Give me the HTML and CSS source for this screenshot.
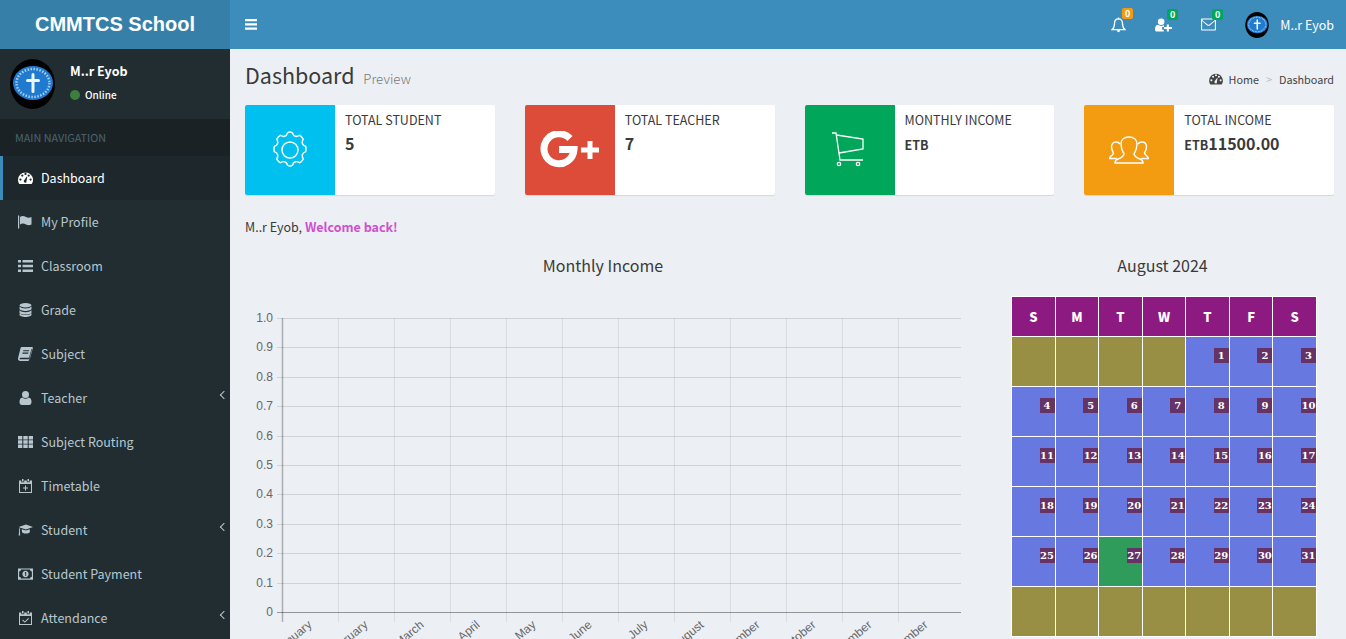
FILE: index.html
```html
<!DOCTYPE html>
<html lang="en">

<head>
    <meta charset="UTF-8">
    <meta name="viewport" content="width=device-width, initial-scale=1.0">
    <title>CMMTCS School</title>
    <link rel="stylesheet" href="styles.css">
</head>

<body>
    <svg class="defs" width="0" height="0">
        <symbol id="gauge" viewBox="0 0 16 14">
            <path fill="currentColor" fill-rule="evenodd" d="M8 1a8 8 0 0 0-8 8c0 1.600.4 3 1.200 4.200.1.200.3.300.5.300h12.600c.2 0 .4-.1.500-.3A8 8 0 0 0 8 1zM2.600 9.800a1.200 1.200 0 1 1 0-2.400 1.200 1.200 0 0 1 0 2.400zm2-4.200a1.200 1.200 0 1 1 0-2.400 1.200 1.200 0 0 1 0 2.400zM8 3.900a1.200 1.200 0 1 1 0-2.400 1.200 1.200 0 0 1 0 2.400zm1.200 7.700a1.800 1.800 0 0 1-3-1.600l3.200-4.600.5.200-1 5.400c.2.100.2.400.3.600zm2.200-6a1.200 1.200 0 1 1 0-2.400 1.200 1.200 0 0 1 0 2.400zm2 4.200a1.200 1.200 0 1 1 0-2.400 1.200 1.200 0 0 1 0 2.400z"/>
        </symbol>
        <symbol id="flag" viewBox="0 0 15 14">
            <rect x="0" y="0.500" width="1.200" height="13" fill="currentColor"/>
            <path fill="currentColor" d="M2 2c2-1.400 4-1 6 0s3.700.8 5.500 0v7.500c-1.800 1-3.500 1.100-5.500 0S4 8.200 2 9.500z"/>
        </symbol>
        <symbol id="list" viewBox="0 0 15 12">
            <path fill="currentColor" d="M0 0h3v2.600H0zM0 4.700h3v2.600H0zM0 9.400h3V12H0zM4.500 0H15v2.600H4.500zM4.500 4.700H15v2.600H4.500zM4.500 9.400H15V12H4.500z"/>
        </symbol>
        <symbol id="database" viewBox="0 0 12 14">
            <ellipse cx="6" cy="2.200" rx="6" ry="2.200" fill="currentColor"/>
            <path fill="currentColor" d="M0 3.600c1 1.300 3.500 1.900 6 1.900s5-.6 6-1.900v2.100c0 1.200-2.700 2.200-6 2.200S0 6.900 0 5.700zM0 7.300c1 1.300 3.500 1.900 6 1.900s5-.6 6-1.900v2.100c0 1.200-2.700 2.200-6 2.200S0 10.600 0 9.400zM0 10.200c1 1.300 3.500 1.900 6 1.900s5-.6 6-1.900v1.600C12 13 9.300 14 6 14s-6-1-6-2.200z"/>
        </symbol>
        <symbol id="book" viewBox="0 0 14 13">
            <path fill="currentColor" fill-rule="evenodd" d="M3.500 0H13c.7 0 1 .5.800 1.200l-2.500 9c-.2.800-.8 1.300-1.600 1.300H2.500c-.6 0-1-.3-1-.8 0-.5.400-.8 1-.8h7.800l2.300-8.300.5.400L10.400 12c-.2.700-.8 1-1.500 1H2c-1.200 0-2-.8-2-2 0-.4 0-.8.200-1.200L2.400.9C2.600.3 3 0 3.500 0zM5 3l-.3 1h5.500l.3-1zM4.300 5.200l-.3 1h5.500l.3-1z"/>
        </symbol>
        <symbol id="user" viewBox="0 0 12 14">
            <circle cx="6" cy="3.500" r="3.500" fill="currentColor"/>
            <path fill="currentColor" d="M3 6.500c.8.800 1.800 1.200 3 1.200s2.200-.4 3-1.200c2 .2 3 1.800 3 4.500 0 1.800-1 3-2.500 3h-7C1 14 0 12.800 0 11c0-2.700 1-4.300 3-4.500z"/>
        </symbol>
        <symbol id="grid" viewBox="0 0 15 12">
            <path fill="currentColor" d="M0 0h4.300v3.500H0zM5.300 0h4.400v3.500H5.300zM10.700 0H15v3.500h-4.300zM0 4.300h4.300v3.400H0zM5.300 4.300h4.400v3.400H5.300zM10.700 4.300H15v3.400h-4.300zM0 8.500h4.300V12H0zM5.300 8.500h4.400V12H5.300zM10.700 8.500H15V12h-4.300z"/>
        </symbol>
        <symbol id="cal-plus" viewBox="0 0 13 14">
            <path fill="currentColor" fill-rule="evenodd" d="M3 0h1.500v2.500H3zM8.500 0H10v2.500H8.500zM0 1.500h2.300v1.800h2.900V1.500h2.600v1.800h2.900V1.500H13V14H0zM1 5v8h11V5zM6 6.500h1v2h2v1H7v2H6v-2H4v-1h2z"/>
        </symbol>
        <symbol id="cal-check" viewBox="0 0 13 14">
            <path fill="currentColor" fill-rule="evenodd" d="M3 0h1.500v2.500H3zM8.500 0H10v2.500H8.500zM0 1.500h2.300v1.800h2.900V1.500h2.600v1.800h2.900V1.500H13V14H0zM1 5v8h11V5zM9.300 7l.7.700-4.200 4.100L3.200 9.300l.7-.7 1.900 1.800z"/>
        </symbol>
        <symbol id="cap" viewBox="0 0 18 13">
            <path fill="currentColor" d="M9.500 0l8.500 3-8.500 3L3 3.700c-.6.500-.8 1.200-.9 2 .3.200.4.400.4.700 0 .2-.1.400-.3.600L2.600 13H.8l.5-6C1.100 6.800 1 6.600 1 6.400c0-.3.100-.5.400-.7.100-1 .4-1.900 1-2.500L1 3zM4.500 5.500l5 1.700 4.500-1.600.3 3c0 1.200-2.200 2.200-4.800 2.200s-4.800-1-4.800-2.200z"/>
        </symbol>
        <symbol id="money" viewBox="0 0 16 12">
            <path fill="currentColor" fill-rule="evenodd" d="M0 0h16v12H0zM1.200 3.200v5.600c1.100 0 2 .9 2 2h9.600c0-1.100.9-2 2-2V3.200c-1.100 0-2-.9-2-2H3.200c0 1.100-.9 2-2 2zM8 2.500c1.900 0 3.300 1.600 3.300 3.500S9.900 9.500 8 9.500 4.700 7.900 4.700 6 6.100 2.500 8 2.500zM7.200 4.500v.7h.5V8h1V3.900h-.8z"/>
        </symbol>
        <symbol id="bell" viewBox="0 0 16 16">
            <path fill="none" stroke="currentColor" stroke-width="1.400" d="M8 1.500c-2.700 0-4.200 2-4.200 4.500 0 3.500-1.200 5.600-2.800 7h14c-1.600-1.400-2.800-3.500-2.800-7 0-2.500-1.500-4.500-4.200-4.500z"/>
            <path fill="currentColor" d="M6.300 13.600h3.400c0 1.200-.7 2-1.700 2s-1.700-.8-1.700-2zM7.300 0h1.400v2H7.300z"/>
        </symbol>
        <symbol id="user-plus" viewBox="0 0 18 14">
            <circle cx="6.500" cy="3.500" r="3.500" fill="currentColor"/>
            <path fill="currentColor" d="M3 6.800c1 .8 2.200 1.200 3.500 1.200 1.200 0 2.200-.3 3-.9v2h-2v3h1.800V14H2c-1.200 0-2-.8-2-2 0-2.800.8-4.900 3-5.200z"/>
            <path fill="currentColor" d="M12.500 6.500h2.200v2.500H18v2.200h-3.300V14h-2.200v-2.800H9.500V9h3z"/>
        </symbol>
        <symbol id="envelope" viewBox="0 0 16 13">
            <path fill="currentColor" fill-rule="evenodd" d="M1.300 0h13.400c.7 0 1.300.6 1.300 1.300v10.400c0 .7-.6 1.300-1.300 1.300H1.300C.6 13 0 12.400 0 11.700V1.300C0 .6.600 0 1.300 0zm-.1 2.800v8.900c0 .1 0 .1.100.1h13.400c.1 0 .1 0 .1-.1V2.800L9.700 7.200c-1 .8-2.400.8-3.400 0zm.1-1.600c0 .7.400 1 1 1.500l4.800 3.700c.5.400 1.300.4 1.800 0l4.800-3.700c.6-.5 1-.8 1-1.500z"/>
        </symbol>
        <symbol id="bars" viewBox="0 0 12 11">
            <path fill="currentColor" d="M0 0h12v2.200H0zM0 4.300h12v2.200H0zM0 8.600h12v2.200H0z"/>
        </symbol>
        <symbol id="crest" viewBox="0 0 45 50">
            <ellipse cx="22.500" cy="25" rx="22.500" ry="25" fill="#000"/>
            <ellipse cx="23" cy="24" rx="20" ry="17" fill="#1f7ad0"/>
            <ellipse cx="23" cy="24" rx="16.500" ry="14" fill="none" stroke="#d5e8f8" stroke-width="2.500" stroke-dasharray="1.500 1.500" opacity=".75"/>
            <path stroke="#eef5fb" stroke-width="3" stroke-linecap="round" fill="none" d="M23 15.500v17M17.500 21.500h11"/>
        </symbol>
    </svg>

    <header class="topbar">
        <div class="logo">CMMTCS School</div>
        <nav class="navbar">
            <svg class="bars"><use href="#bars"/></svg>
            <div class="nav-right">
                <div class="nav-icon">
                    <svg class="bell"><use href="#bell"/></svg>
                    <span class="count orange">0</span>
                </div>
                <div class="nav-icon">
                    <svg class="uplus"><use href="#user-plus"/></svg>
                    <span class="count green">0</span>
                </div>
                <div class="nav-icon">
                    <svg class="mail"><use href="#envelope"/></svg>
                    <span class="count green">0</span>
                </div>
                <div class="nav-user">
                    <svg class="nav-avatar"><use href="#crest"/></svg>
                    <span>M..r Eyob</span>
                </div>
            </div>
        </nav>
    </header>

    <div class="wrapper">
        <aside class="sidebar">
            <div class="user-panel">
                <svg class="avatar"><use href="#crest"/></svg>
                <div class="user-info">
                    <div class="user-name">M..r Eyob</div>
                    <div class="user-status"><span class="dot"></span>Online</div>
                </div>
            </div>
            <div class="menu-head">MAIN NAVIGATION</div>
            <ul class="menu">
                <li class="active"><svg class="ico"><use href="#gauge"/></svg>Dashboard</li>
                <li><svg class="ico"><use href="#flag"/></svg>My Profile</li>
                <li><svg class="ico"><use href="#list"/></svg>Classroom</li>
                <li><svg class="ico"><use href="#database"/></svg>Grade</li>
                <li><svg class="ico"><use href="#book"/></svg>Subject</li>
                <li><svg class="ico"><use href="#user"/></svg>Teacher<span class="caret"></span></li>
                <li><svg class="ico"><use href="#grid"/></svg>Subject Routing</li>
                <li><svg class="ico"><use href="#cal-plus"/></svg>Timetable</li>
                <li><svg class="ico"><use href="#cap"/></svg>Student<span class="caret"></span></li>
                <li><svg class="ico"><use href="#money"/></svg>Student Payment</li>
                <li><svg class="ico"><use href="#cal-check"/></svg>Attendance<span class="caret"></span></li>
            </ul>
        </aside>

        <main class="content">
            <div class="page-head">
                <h1>Dashboard <small>Preview</small></h1>
                <div class="crumbs">
                    <svg class="crumb-ico"><use href="#gauge"/></svg>
                    <span>Home</span>
                    <span class="sep">&gt;</span>
                    <span>Dashboard</span>
                </div>
            </div>

            <div class="boxes">
                <div class="info-box">
                    <div class="box-icon cyan">
                        <svg width="38" height="38" viewBox="0 0 38 38" fill="none" stroke="#fff" stroke-width="1.500">
                            <circle cx="19" cy="19" r="8"/>
                            <path d="M16.500 3c1.600-1 3.400-1 5 0 .5 2 1.200 3 3 3.500 1.500.5 3-.3 4.500-1 1.400 1 2.600 2.300 3.500 3.800-.8 1.500-1.400 2.800-.8 4.500.5 1.600 1.800 2.400 3.300 3 .4 1.700.4 3.700 0 5.400-1.500.6-2.800 1.400-3.300 3-.6 1.700 0 3 .8 4.500-.9 1.500-2.100 2.800-3.500 3.800-1.500-.7-3-1.500-4.500-1-1.800.5-2.500 1.500-3 3.500-1.600 1-3.400 1-5 0-.5-2-1.200-3-3-3.500-1.500-.5-3 .3-4.500 1-1.400-1-2.600-2.300-3.500-3.800.8-1.500 1.400-2.800.8-4.500-.5-1.600-1.800-2.400-3.300-3-.4-1.700-.4-3.700 0-5.400 1.500-.6 2.800-1.400 3.300-3 .6-1.700 0-3-.8-4.500.9-1.500 2.100-2.800 3.500-3.800 1.500.7 3 1.500 4.500 1 1.800-.5 2.500-1.500 3-3.500z" transform="translate(19 19) scale(.98) translate(-19 -20.500)"/>
                        </svg>
                    </div>
                    <div class="box-text">
                        <span class="box-label">TOTAL STUDENT</span>
                        <span class="box-num">5</span>
                    </div>
                </div>
                <div class="info-box">
                    <div class="box-icon red">
                        <svg width="60" height="38" viewBox="0 0 60 38">
                            <path fill="none" stroke="#fff" stroke-width="7" d="M30 7.500A15 15 0 1 0 34 18.500H19"/>
                            <path fill="#fff" d="M47.500 10h5v6.500H59v5h-6.500V28h-5v-6.500H41v-5h6.500z"/>
                        </svg>
                    </div>
                    <div class="box-text">
                        <span class="box-label">TOTAL TEACHER</span>
                        <span class="box-num">7</span>
                    </div>
                </div>
                <div class="info-box">
                    <div class="box-icon lime">
                        <svg width="36" height="36" viewBox="0 0 36 36" fill="none" stroke="#fff" stroke-width="1.300">
                            <path d="M0 1h4l4 27h23"/>
                            <path d="M4.500 3L31 7v10L7 21"/>
                            <circle cx="7" cy="32" r="1.700"/>
                            <circle cx="26" cy="32" r="1.700"/>
                        </svg>
                    </div>
                    <div class="box-text">
                        <span class="box-label">MONTHLY INCOME</span>
                        <span class="box-num"><small>ETB</small></span>
                    </div>
                </div>
                <div class="info-box">
                    <div class="box-icon amber">
                        <svg width="40" height="28" viewBox="0 0 40 28" fill="none" stroke="#fff" stroke-width="1.400">
                            <path d="M15 18c-2-3-3-6-3-10 0-4 3-7 8-7s8 3 8 7c0 4-1 7-3 10 1 3 3 4 6 5 2 .7 3 2 3 4H6c0-2 1-3.300 3-4 3-1 5-2 6-5z"/>
                            <path d="M11 8C10 6.500 8.500 6 7 6c-3 0-4.500 2-4.500 5 0 2.500 1 4 2 6-.5 2-2 2.500-3 3.500-.5.500-.8 1.200-.8 2h7"/>
                            <path d="M29 8c1-1.500 2.500-2 4-2 3 0 4.500 2 4.500 5 0 2.500-1 4-2 6 .5 2 2 2.500 3 3.500.5.500.8 1.200.8 2h-7"/>
                        </svg>
                    </div>
                    <div class="box-text">
                        <span class="box-label">TOTAL INCOME</span>
                        <span class="box-num"><small>ETB</small>11500.00</span>
                    </div>
                </div>
            </div>

            <p class="welcome">M..r Eyob, <b>Welcome back!</b></p>

            <div class="panels">
                <section class="chart-panel">
                    <h3>Monthly Income</h3>
                    <svg class="chart" id="chart" width="716" height="340"></svg>
                </section>
                <section class="cal-panel">
                    <h3>August 2024</h3>
                    <table class="calendar">
                        <thead>
                            <tr><th>S</th><th>M</th><th>T</th><th>W</th><th>T</th><th>F</th><th>S</th></tr>
                        </thead>
                        <tbody id="calBody"></tbody>
                    </table>
                </section>
            </div>
        </main>
    </div>

    <script>
        // chart gridlines and labels, same scale as the reference chart
        const chart = document.getElementById('chart')
        const months = ['January', 'February', 'March', 'April', 'May', 'June', 'July', 'August', 'September', 'October', 'November', 'December']
        const left = 37, top0 = 24, stepY = 29.4, stepX = 56, right = 716
        let out = ''
        for (let i = 0; i <= 10; i++) {
            const y = Math.round(top0 + i * stepY) + .5
            const label = i == 10 ? '0' : ((10 - i) / 10).toFixed(1)
            out += `<line x1="${left - 5}" x2="${right}" y1="${y}" y2="${y}" class="${i == 10 ? 'axis' : 'grid-h'}"/>`
            out += `<text x="${left - 9}" y="${y + 3}" class="ylab">${label}</text>`
        }
        months.forEach((m, i) => {
            const x = left + i * stepX + .5
            out += `<line x1="${x}" x2="${x}" y1="${top0}" y2="${top0 + 304}" class="${i == 0 ? 'axis-y' : 'grid-v'}"/>`
            out += `<text transform="translate(${x + 30} ${top0 + 308}) rotate(-40)" class="xlab">${m}</text>`
        })
        chart.innerHTML = out

        // August 2024: four blanks, 31 days, then a blank row
        const calBody = document.getElementById('calBody')
        let html = '', day = 1
        for (let r = 0; r < 6; r++) {
            html += '<tr>'
            for (let c = 0; c < 7; c++) {
                if ((r == 0 && c < 4) || day > 31) {
                    html += '<td class="blank"></td>'
                } else {
                    html += `<td class="${day == 27 ? 'today' : ''}"><span>${day}</span></td>`
                    day++
                }
            }
            html += '</tr>'
        }
        calBody.innerHTML = html
    </script>
</body>

</html>
```

FILE: styles.css
```css
html, body {
    height: 100%;
    margin: 0;
    overflow: hidden;
}

body {
    display: flex;
    flex-direction: column;
    background-color: #ecf0f5;
    color: #3a3a3a;
    font-family: "Noto Sans CJK SC", "Noto Sans", sans-serif;
    font-size: 12.5px;
    line-height: 20px;
}

.defs {
    position: absolute;
}

/* top bar */
.topbar {
    display: flex;
    flex: none;
    height: 49px;
}

.logo {
    width: 230px;
    background-color: #367fa9;
    color: #fff;
    font-family: "Liberation Sans", sans-serif;
    font-size: 20px;
    font-weight: 700;
    line-height: 49px;
    text-align: center;
}

.navbar {
    flex: 1;
    display: flex;
    align-items: center;
    justify-content: space-between;
    padding: 0 12px 0 15px;
    background-color: #3c8dbc;
    color: #fff;
}

.bars {
    width: 12px;
    height: 11px;
}

.nav-right {
    display: flex;
    align-items: center;
}

.nav-icon {
    position: relative;
    display: flex;
    justify-content: center;
    width: 45px;
}

.bell {
    width: 15px;
    height: 16px;
}

.uplus {
    width: 17px;
    height: 14px;
}

.mail {
    width: 15px;
    height: 13px;
}

.count {
    position: absolute;
    top: -9px;
    left: 26px;
    width: 11px;
    height: 11px;
    border-radius: 2px;
    color: #fff;
    font-size: 9px;
    font-weight: 700;
    line-height: 11px;
    text-align: center;
}

.orange {
    background-color: #f39c12;
}

.green {
    background-color: #00a65a;
}

.nav-user {
    display: flex;
    align-items: center;
    gap: 10px;
    margin-left: 13px;
}

.nav-avatar {
    width: 26px;
    height: 26px;
}

/* sidebar */
.wrapper {
    flex: 1;
    display: flex;
    min-height: 0;
}

.sidebar {
    flex: none;
    width: 230px;
    background-color: #222d32;
}

.user-panel {
    display: flex;
    gap: 15px;
    height: 70px;
    padding: 10px 0 0 10px;
    box-sizing: border-box;
}

.avatar {
    width: 45px;
    height: 50px;
}

.user-name {
    margin-top: 2px;
    color: #fff;
    font-weight: 700;
}

.user-status {
    display: flex;
    align-items: center;
    margin-top: 4px;
    color: #fff;
    font-size: 10px;
    font-weight: 500;
}

.dot {
    width: 10px;
    height: 10px;
    margin-right: 5px;
    border-radius: 50%;
    background-color: #3d7d3d;
}

.menu-head {
    height: 37px;
    padding-left: 15px;
    background-color: #1a2226;
    color: #4b646f;
    font-size: 10.8px;
    line-height: 37px;
}

.menu {
    margin: 0;
    padding: 0;
    list-style: none;
}

.menu li {
    position: relative;
    display: flex;
    align-items: center;
    height: 44px;
    padding-left: 18px;
    color: #b8c7ce;
}

.menu li.active {
    padding-left: 15px;
    border-left: 3px solid #3c8dbc;
    background-color: #1e282c;
    color: #fff;
}

.ico {
    flex: none;
    width: 15px;
    height: 14px;
    margin-right: 8px;
}

.caret {
    position: absolute;
    right: 3px;
    top: 16px;
    width: 5px;
    height: 5px;
    border-left: 1.500px solid #b8c7ce;
    border-bottom: 1.500px solid #b8c7ce;
    transform: rotate(45deg);
}

/* content */
.content {
    flex: 1;
    min-width: 0;
    padding: 15px 12px 0 15px;
}

.page-head {
    display: flex;
    justify-content: space-between;
    align-items: center;
    height: 26px;
}

h1 {
    margin: 0;
    font-size: 21.5px;
    font-weight: 400;
    line-height: 26px;
}

h1 small {
    margin-left: 4px;
    color: #777;
    font-size: 13.3px;
    font-weight: 300;
}

.crumbs {
    display: flex;
    align-items: center;
    font-size: 10.8px;
    color: #444;
    padding-top: 4px;
}

.crumb-ico {
    width: 14px;
    height: 12px;
    margin-right: 6px;
}

.sep {
    margin: 0 7px;
    color: #bbb;
}

.boxes {
    display: grid;
    grid-template-columns: repeat(4, 1fr);
    gap: 30px;
    margin-top: 15px;
}

.info-box {
    display: flex;
    height: 90px;
    border-radius: 2px;
    background-color: #fff;
    box-shadow: 0 1px 1px rgba(0, 0, 0, 0.1);
    overflow: hidden;
}

.box-icon {
    flex: none;
    display: flex;
    align-items: center;
    justify-content: center;
    width: 90px;
}

.cyan {
    background-color: #00c0ef;
}

.red {
    background-color: #dd4b39;
}

.lime {
    background-color: #00a65a;
}

.amber {
    background-color: #f39c12;
}

.box-text {
    padding: 5px 10px;
}

.box-label {
    display: block;
}

.box-num {
    display: block;
    margin-top: 3px;
    font-size: 16px;
    font-weight: 700;
}

.box-num small {
    font-size: 12.5px;
}

.welcome {
    margin: 22px 0 0;
}

.welcome b {
    color: #d04fd0;
}

.panels {
    display: flex;
}

h3 {
    margin: 0;
    font-size: 16px;
    font-weight: 400;
    line-height: 20px;
    text-align: center;
}

.chart-panel {
    flex: none;
    width: 716px;
    padding-top: 18px;
}

.chart {
    display: block;
    margin-top: 19px;
    overflow: visible;
}

.chart .grid-h {
    stroke: rgba(0, 0, 0, 0.12);
}

.chart .grid-v {
    stroke: rgba(0, 0, 0, 0.08);
}

.chart .axis {
    stroke: rgba(0, 0, 0, 0.38);
}

.chart .axis-y {
    stroke: rgba(0, 0, 0, 0.28);
    stroke-width: 1.500;
}

.ylab, .xlab {
    fill: #666;
    font-family: "Liberation Sans", sans-serif;
    font-size: 12px;
    text-anchor: end;
}

.cal-panel {
    flex: none;
    width: 343px;
    margin-left: 30px;
    padding-top: 18px;
}

.calendar {
    width: 306px;
    margin: 21px 0 0 20px;
    border-collapse: collapse;
    table-layout: fixed;
    color: #fff;
}

.calendar th, .calendar td {
    border: 1px solid #fff;
    padding: 0;
}

.calendar th {
    height: 39px;
    background-color: #8c1a80;
    font-size: 13px;
    font-weight: 900;
}

.calendar td {
    height: 49px;
    background-color: #6779e0;
    text-align: right;
    vertical-align: top;
}

.calendar td.blank {
    background-color: #998f44;
}

.calendar td.today {
    background-color: #2f9c5c;
}

.calendar td span {
    display: inline-block;
    min-width: 15px;
    height: 15px;
    margin-top: 11px;
    background-color: #663366;
    font-family: "DejaVu Serif", serif;
    font-size: 10px;
    font-weight: 700;
    line-height: 15px;
    text-align: center;
    vertical-align: top;
}
```
